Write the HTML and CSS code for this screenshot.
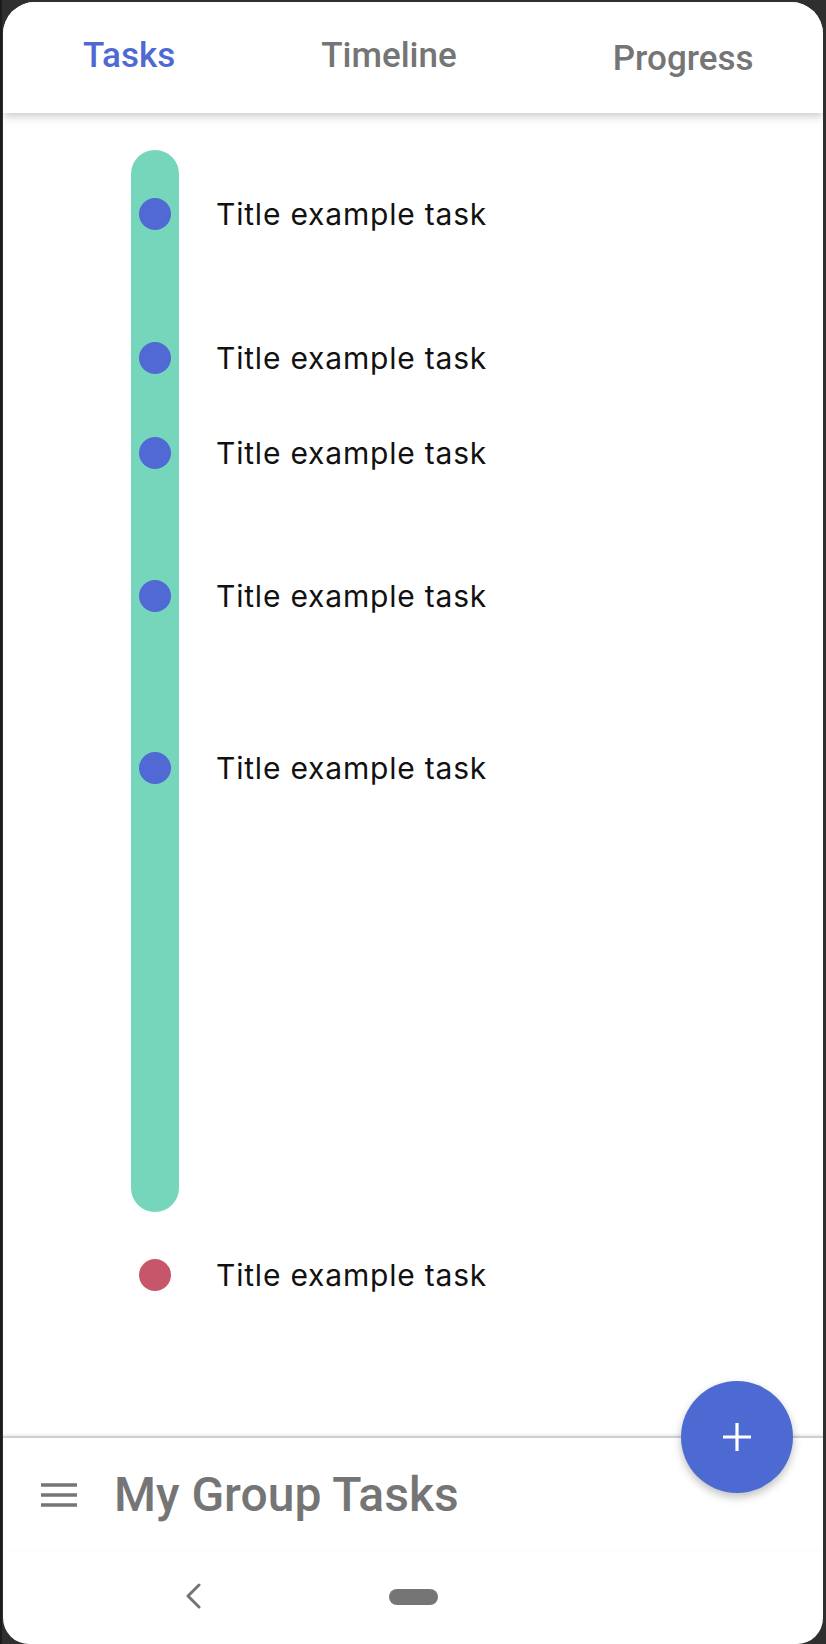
FILE: index.html
```html
<!DOCTYPE html>
<html lang="en">
<head>
<meta charset="utf-8">
<title>My Group Tasks</title>
<link rel="stylesheet" href="styles.css">
</head>
<body>
<div class="screen">
  <header class="tabs">
    <span class="tab tab-active">Tasks</span>
    <span class="tab tab-timeline">Timeline</span>
    <span class="tab tab-progress">Progress</span>
  </header>

  <main class="content">
    <div class="track">
      <div class="row" style="margin-top:48px"><span class="dot"></span><span class="label">Title example task</span></div>
      <div class="row" style="margin-top:112px"><span class="dot"></span><span class="label">Title example task</span></div>
      <div class="row" style="margin-top:63px"><span class="dot"></span><span class="label">Title example task</span></div>
      <div class="row" style="margin-top:111px"><span class="dot"></span><span class="label">Title example task</span></div>
      <div class="row" style="margin-top:140px"><span class="dot"></span><span class="label">Title example task</span></div>
    </div>
    <div class="row row-late"><span class="dot dot-late"></span><span class="label">Title example task</span></div>
  </main>

  <footer class="appbar">
    <button class="fab" aria-label="Add task">
      <svg width="30" height="30" viewBox="0 0 30 30"><path d="M15 1v28M1 15h28" stroke="#fff" stroke-width="3.2" fill="none"/></svg>
    </button>
    <div class="appbar-row">
      <svg class="menu" width="36" height="24" viewBox="0 0 36 24"><path d="M0 2h36M0 12h36M0 22h36" stroke="#757575" stroke-width="3.6" fill="none"/></svg>
      <span class="appbar-title">My Group Tasks</span>
    </div>
  </footer>

  <nav class="sysnav">
    <svg class="back" width="16" height="26" viewBox="0 0 16 26"><path d="M14 2 3 13l11 11" stroke="#757575" stroke-width="3" fill="none" stroke-linecap="round" stroke-linejoin="round"/></svg>
    <span class="home"></span>
  </nav>
</div>
</body>
</html>
```

FILE: styles.css
```css
* { box-sizing: border-box; }

html, body {
  margin: 0;
  padding: 0;
  background: #2f2f2f;
}

body {
  width: 826px;
  height: 1644px;
  overflow: hidden;
  border-left: 2px solid #1c1c1c;
  padding: 2px 3px 0 1px;
}

.screen {
  position: relative;
  height: 1642px;
  background: #ffffff;
  border-radius: 32px 32px 26px 26px;
  overflow: hidden;
  display: flex;
  flex-direction: column;
  font-family: Roboto, "Liberation Sans", sans-serif;
}

.tabs {
  height: 111px;
  flex: none;
  display: flex;
  align-items: flex-start;
  padding-left: 80px;
  background: #fff;
  box-shadow: 0 3px 9px rgba(0, 0, 0, 0.22);
  position: relative;
  z-index: 2;
}

.tab {
  font-size: 35px;
  font-weight: 500;
  color: #757575;
  line-height: 40px;
  margin-top: 34px;
}

.tab-active { color: #4e69d3; }
.tab-timeline { margin-left: 146px; }
.tab-progress { margin-left: 156px; margin-top: 37px; }

.content {
  height: 1323px;
  flex: none;
  padding-top: 37px;
  padding-left: 128px;
}

.track {
  position: relative;
  height: 1062px;
  display: flex;
  flex-direction: column;
}

.track::before {
  content: "";
  position: absolute;
  left: 0;
  top: 0;
  width: 48px;
  height: 1062px;
  border-radius: 24px;
  background: #76d6bb;
}

.row {
  position: relative;
  display: flex;
  align-items: center;
  height: 32px;
  padding-left: 8px;
  flex: none;
}

.row-late { margin-top: 47px; }

.dot {
  width: 32px;
  height: 32px;
  border-radius: 50%;
  background: #5069d5;
  flex: none;
}

.dot-late { background: #c8566a; }

.label {
  margin-left: 45px;
  font-family: Inter, "Noto Sans", sans-serif;
  font-size: 30px;
  letter-spacing: 0.8px;
  color: #111;
  line-height: 32px;
}

.appbar {
  position: relative;
  height: 114px;
  flex: none;
  border-top: 2px solid #cfcfcf;
  box-shadow: 0 -1px 3px rgba(0, 0, 0, 0.1);
}

.appbar-row {
  display: flex;
  align-items: center;
  padding-left: 38px;
  padding-top: 29px;
}

.menu { flex: none; }

.appbar-title {
  margin-left: 37px;
  font-size: 48px;
  font-weight: 500;
  color: #757575;
  line-height: 56px;
}

.fab {
  position: absolute;
  right: 30px;
  top: -57px;
  width: 112px;
  height: 112px;
  border-radius: 50%;
  border: none;
  padding: 0;
  background: #4d6ad3;
  display: flex;
  align-items: center;
  justify-content: center;
  box-shadow: 0 4px 8px rgba(0, 0, 0, 0.25);
  z-index: 3;
}

.sysnav {
  height: 94px;
  flex: none;
  display: flex;
  align-items: flex-start;
  padding-top: 33px;
  padding-left: 182px;
}

.back { flex: none; }

.home {
  margin-left: 188px;
  margin-top: 6px;
  width: 49px;
  height: 16px;
  border-radius: 8px;
  background: #757575;
}
```
